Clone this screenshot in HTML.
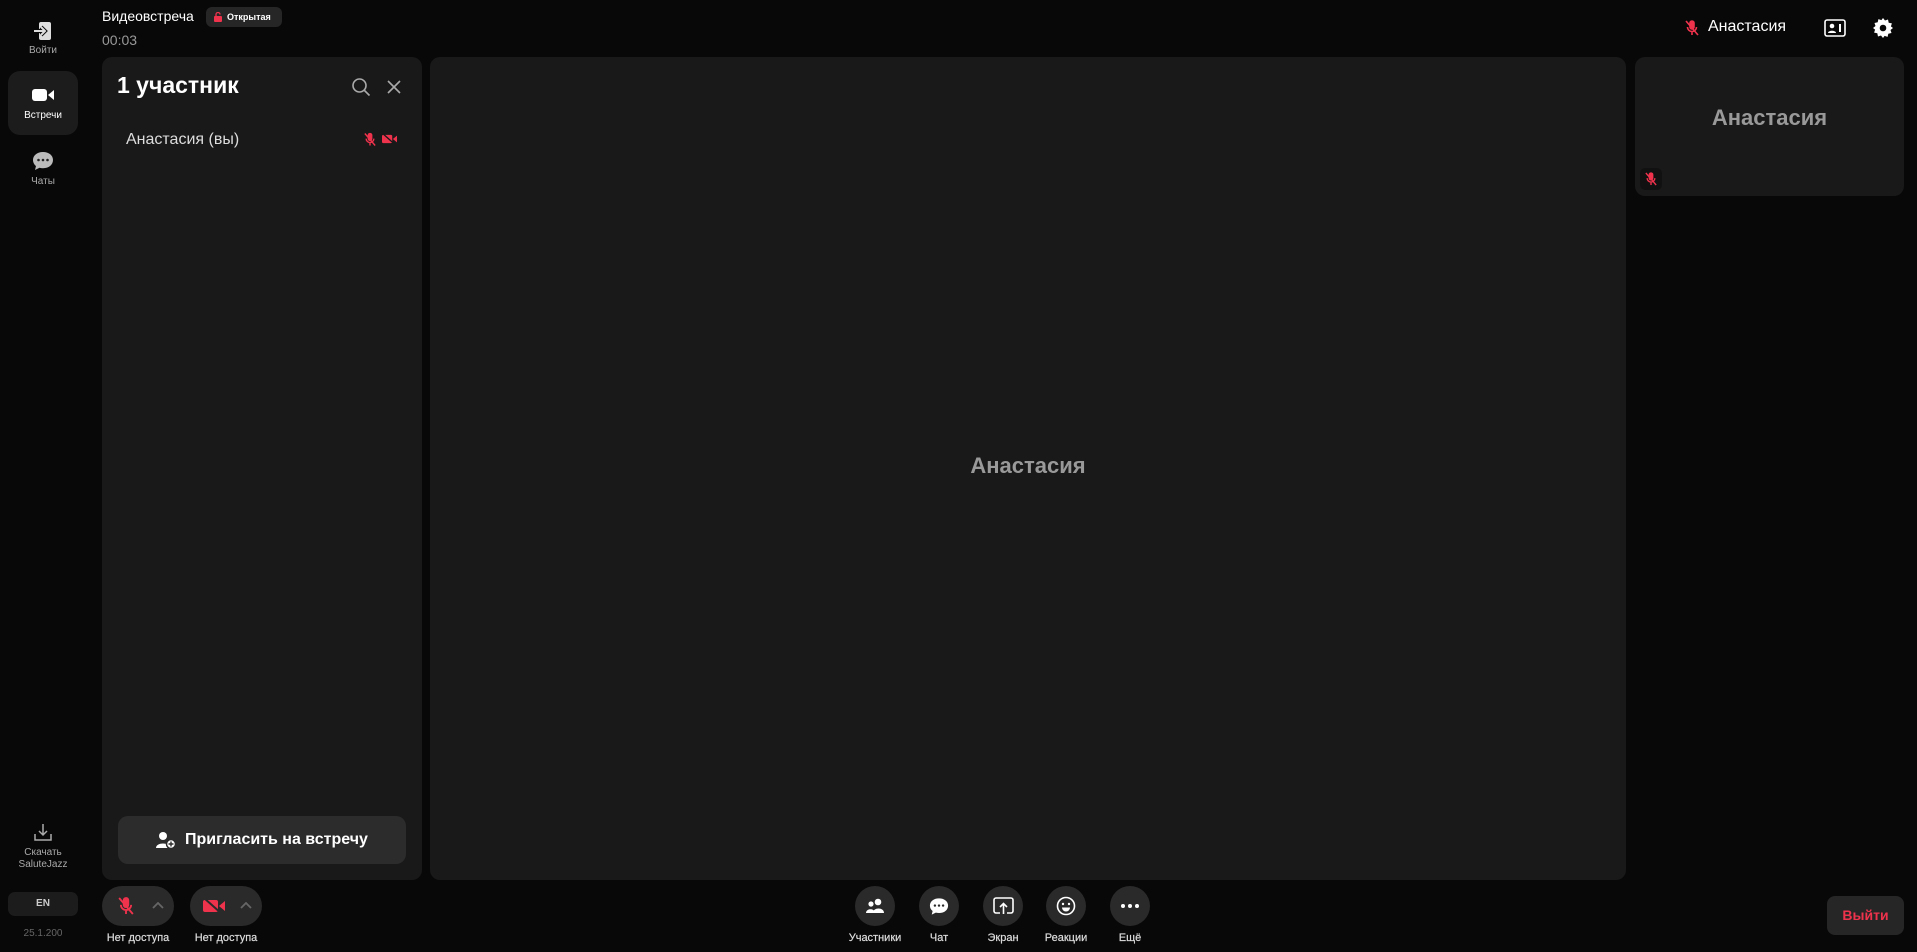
<!DOCTYPE html>
<html><head><meta charset="utf-8"><style>
*{box-sizing:border-box;margin:0;padding:0}
body{width:1917px;height:952px;background:#080808;font-family:"Liberation Sans","Noto Sans CJK SC",sans-serif;color:#fff;position:relative;overflow:hidden}
.a{position:absolute}
.side{font-size:10px;color:#aaa;text-align:center;width:86px;left:0}
.panel{background:#191919;border-radius:10px}
.circ{width:40px;height:40px;border-radius:50%;background:#2a2a2a;display:flex;align-items:center;justify-content:center}
.lbl{font-size:11px;color:#ddd;text-align:center;width:80px;-webkit-text-stroke:0.2px #ddd}
</style></head><body>
<svg class="a" style="left:33px;top:21px" width="20" height="20" viewBox="0 0 20 20"><rect x="6" y="1" width="12" height="18" rx="2" fill="#ddd"/><path d="M1 10h10M8 6l4 4-4 4" stroke="#080808" stroke-width="4" fill="none"/><path d="M1 10h10M8 6l4 4-4 4" stroke="#ddd" stroke-width="2" fill="none"/></svg>
<div class="a side" style="top:45px">Войти</div>
<div class="a" style="left:8px;top:71px;width:70px;height:64px;background:#1c1c1c;border-radius:12px"></div>
<svg class="a" style="left:32px;top:88px" width="22" height="14" viewBox="0 0 22 14"><rect x="0" y="1" width="15" height="12" rx="3" fill="#fff"/><path d="M16 7l6-5v10z" fill="#fff"/></svg>
<div class="a side" style="top:110px;color:#fff">Встречи</div>
<svg class="a" style="left:32px;top:151px" width="22" height="20" viewBox="0 0 22 20"><path d="M11 1C5 1 1 4.5 1 9c0 2.5 1.2 4.6 3 6l-1 4 4.5-2.2c1.1.3 2.3.4 3.5.4 6 0 10-3.6 10-8.2S17 1 11 1z" fill="#bbb"/><circle cx="6.5" cy="9" r="1.3" fill="#222"/><circle cx="11" cy="9" r="1.3" fill="#222"/><circle cx="15.5" cy="9" r="1.3" fill="#222"/></svg>
<div class="a side" style="top:176px">Чаты</div>
<svg class="a" style="left:33px;top:822px" width="20" height="20" viewBox="0 0 20 20" fill="none" stroke="#aaa" stroke-width="1.5"><path d="M10 2v11M6 9l4 4 4-4M2 12v6h16v-6"/></svg>
<div class="a side" style="top:847px;line-height:12px">Скачать<br>SaluteJazz</div>
<div class="a" style="left:8px;top:892px;width:70px;height:24px;background:#1c1c1c;border-radius:7px;font-size:10px;font-weight:bold;color:#ccc;text-align:center;line-height:24px">EN</div>
<div class="a side" style="top:928px;color:#666">25.1.200</div>
<div class="a" style="left:102px;top:8px;font-size:14px">Видеовстреча</div>
<div class="a" style="left:206px;top:7px;width:76px;height:20px;background:#262626;border-radius:6px;font-size:9px;font-weight:bold;line-height:20px;padding-left:21px">Открытая</div>
<svg class="a" style="left:214px;top:12px" width="8" height="10" viewBox="0 0 8 10"><rect x="0" y="4" width="8" height="6" rx="1" fill="#f0334d"/><path d="M2 4V2.5a2 2 0 014 0" stroke="#f0334d" stroke-width="1.3" fill="none"/></svg>
<div class="a" style="left:102px;top:32px;font-size:14px;color:#999">00:03</div>
<svg class="a" style="left:1685px;top:20px" width="14" height="16" viewBox="0 0 14 16" fill="none" stroke="#f0334d" stroke-width="1.6"><rect x="5" y="1" width="4" height="8" rx="2" fill="#f0334d"/><path d="M2.5 7a4.5 4.5 0 009 0M7 12v3M1 1l12 14"/></svg>
<div class="a" style="left:1708px;top:18px;font-size:16px">Анастасия</div>
<svg class="a" style="left:1824px;top:19px" width="22" height="18" viewBox="0 0 22 18"><rect x="1" y="1" width="20" height="16" rx="2" fill="none" stroke="#fff" stroke-width="1.6"/><circle cx="8" cy="7" r="2.3" fill="#fff"/><path d="M4 14c0-3 8-3 8 0z" fill="#fff"/><rect x="15" y="5" width="2" height="8" fill="#fff"/></svg>
<svg class="a" style="left:1873px;top:18px" width="20" height="20" viewBox="0 0 20 20"><path d="M10 0l2 2.5 3-1 .7 3.2 3.2.7-1 3L20 10l-2.5 2 1 3-3.2.7-.7 3.2-3-1L10 20l-2-2.5-3 1-.7-3.2-3.2-.7 1-3L0 10l2.5-2-1-3 3.2-.7.7-3.2 3 1z" fill="#fff"/><circle cx="10" cy="10" r="3.3" fill="#080808"/></svg>
<div class="a panel" style="left:102px;top:57px;width:320px;height:823px"></div>
<div class="a" style="left:117px;top:72px;font-size:23px;font-weight:bold">1 участник</div>
<svg class="a" style="left:351px;top:77px" width="20" height="20" viewBox="0 0 20 20" fill="none" stroke="#aaa" stroke-width="1.6"><circle cx="8.5" cy="8.5" r="6.5"/><path d="M13.5 13.5l5 5"/></svg>
<svg class="a" style="left:387px;top:80px" width="14" height="14" viewBox="0 0 14 14" stroke="#aaa" stroke-width="1.6"><path d="M1 1l12 12M13 1L1 13"/></svg>
<div class="a" style="left:126px;top:131px;font-size:16px;color:#ddd">Анастасия (вы)</div>
<svg class="a" style="left:364px;top:132px" width="12" height="15" viewBox="0 0 14 16" fill="none" stroke="#f0334d" stroke-width="1.6"><rect x="5" y="1" width="4" height="8" rx="2" fill="#f0334d"/><path d="M2.5 7a4.5 4.5 0 009 0M7 12v3M1 1l12 14"/></svg>
<svg class="a" style="left:382px;top:133px" width="15" height="12" viewBox="0 0 22 16"><rect x="0" y="2" width="15" height="12" rx="2" fill="#f0334d"/><path d="M16 8l6-5v10z" fill="#f0334d"/><path d="M1 0l18 16" stroke="#191919" stroke-width="2"/></svg>
<div class="a" style="left:118px;top:816px;width:288px;height:48px;background:#2c2c2c;border-radius:10px;font-size:16px;font-weight:bold;line-height:48px;padding-left:67px">Пригласить на встречу</div>
<svg class="a" style="left:156px;top:831px" width="20" height="18" viewBox="0 0 20 18"><circle cx="7" cy="5" r="4" fill="#fff"/><path d="M0 17c0-6 14-6 14 0z" fill="#fff"/><circle cx="15" cy="13" r="4.5" fill="#fff" stroke="#2c2c2c" stroke-width="1.5"/><path d="M15 10.5v5M12.5 13h5" stroke="#2c2c2c" stroke-width="1.4"/></svg>
<div class="a panel" style="left:430px;top:57px;width:1196px;height:823px"></div>
<div class="a" style="left:430px;top:453px;width:1196px;text-align:center;font-size:22px;font-weight:bold;color:#999">Анастасия</div>
<div class="a panel" style="left:1635px;top:57px;width:269px;height:139px"></div>
<div class="a" style="left:1635px;top:105px;width:269px;text-align:center;font-size:22px;font-weight:bold;color:#999">Анастасия</div>
<div class="a" style="left:1640px;top:168px;width:22px;height:22px;background:#111;border-radius:5px"></div>
<svg class="a" style="left:1645px;top:172px" width="12" height="14" viewBox="0 0 14 16" fill="none" stroke="#f0334d" stroke-width="1.6"><rect x="5" y="1" width="4" height="8" rx="2" fill="#f0334d"/><path d="M2.5 7a4.5 4.5 0 009 0M7 12v3M1 1l12 14"/></svg>
<div class="a" style="left:102px;top:886px;width:72px;height:40px;background:#2a2a2a;border-radius:20px"></div>
<svg class="a" style="left:118px;top:896px" width="16" height="20" viewBox="0 0 14 16" fill="none" stroke="#f0334d" stroke-width="1.6"><rect x="5" y="1" width="4" height="8" rx="2" fill="#f0334d"/><path d="M2.5 7a4.5 4.5 0 009 0M7 12v3M1 1l12 14"/></svg>
<svg class="a" style="left:152px;top:902px" width="12" height="7" viewBox="0 0 12 7" fill="none" stroke="#666" stroke-width="1.8"><path d="M1 6l5-5 5 5"/></svg>
<div class="a lbl" style="left:98px;top:932px">Нет доступа</div>
<div class="a" style="left:190px;top:886px;width:72px;height:40px;background:#2a2a2a;border-radius:20px"></div>
<svg class="a" style="left:203px;top:897px" width="22" height="18" viewBox="0 0 22 16"><rect x="0" y="2" width="15" height="12" rx="2" fill="#f0334d"/><path d="M16 8l6-5v10z" fill="#f0334d"/><path d="M1 0l18 16" stroke="#2a2a2a" stroke-width="2"/></svg>
<svg class="a" style="left:240px;top:902px" width="12" height="7" viewBox="0 0 12 7" fill="none" stroke="#666" stroke-width="1.8"><path d="M1 6l5-5 5 5"/></svg>
<div class="a lbl" style="left:186px;top:932px">Нет доступа</div>
<div class="a circ" style="left:855px;top:886px"><svg width="20" height="16" viewBox="0 0 20 16"><circle cx="13" cy="4" r="3.3" fill="#fff"/><path d="M8 15c0-6 11-6 11 0z" fill="#fff"/><circle cx="6" cy="6" r="2.6" fill="#fff"/><path d="M1 15c0-5 9-5 9 0z" fill="#fff"/></svg></div>
<div class="a lbl" style="left:835px;top:932px">Участники</div>
<div class="a circ" style="left:919px;top:886px"><svg width="20" height="19" viewBox="0 0 22 20"><path d="M11 1C5 1 1 4.5 1 9c0 2.5 1.2 4.6 3 6l-1 4 4.5-2.2c1.1.3 2.3.4 3.5.4 6 0 10-3.6 10-8.2S17 1 11 1z" fill="#fff"/><circle cx="6.5" cy="9" r="1.3" fill="#2a2a2a"/><circle cx="11" cy="9" r="1.3" fill="#2a2a2a"/><circle cx="15.5" cy="9" r="1.3" fill="#2a2a2a"/></svg></div>
<div class="a lbl" style="left:899px;top:932px">Чат</div>
<div class="a circ" style="left:983px;top:886px"><svg width="21" height="18" viewBox="0 0 21 18" fill="none" stroke="#fff" stroke-width="1.6"><path d="M7 16H3a2 2 0 01-2-2V3a2 2 0 012-2h15a2 2 0 012 2v11a2 2 0 01-2 2h-4"/><path d="M10.5 17V7M7 10l3.5-3.5L14 10"/></svg></div>
<div class="a lbl" style="left:963px;top:932px">Экран</div>
<div class="a circ" style="left:1046px;top:886px"><svg width="20" height="20" viewBox="0 0 20 20"><circle cx="10" cy="10" r="8.5" fill="none" stroke="#fff" stroke-width="1.6"/><circle cx="7" cy="8" r="1.2" fill="#fff"/><circle cx="13" cy="8" r="1.2" fill="#fff"/><path d="M6 11.5h8a4 4 0 01-8 0z" fill="#fff"/></svg></div>
<div class="a lbl" style="left:1026px;top:932px">Реакции</div>
<div class="a circ" style="left:1110px;top:886px"><svg width="18" height="4" viewBox="0 0 18 4" fill="#fff"><circle cx="2" cy="2" r="2"/><circle cx="9" cy="2" r="2"/><circle cx="16" cy="2" r="2"/></svg></div>
<div class="a lbl" style="left:1090px;top:932px">Ещё</div>
<div class="a" style="left:1827px;top:896px;width:77px;height:39px;background:#262626;border-radius:8px;color:#f0334d;font-size:14px;font-weight:bold;text-align:center;line-height:39px">Выйти</div>
</body></html>
